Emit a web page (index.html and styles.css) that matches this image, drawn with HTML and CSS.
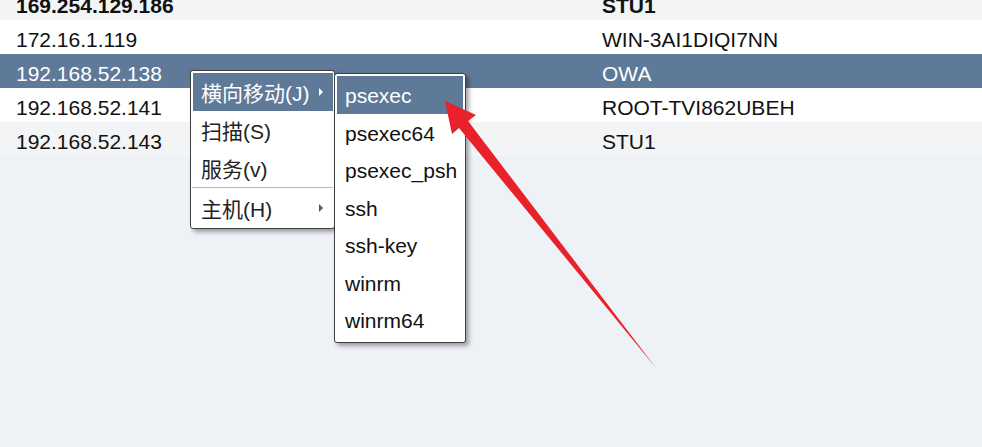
FILE: index.html
```html
<!DOCTYPE html>
<html lang="zh-CN">
<head>
    <meta charset="UTF-8">
    <meta name="viewport" content="width=device-width, initial-scale=1.0">
    <title>Targets</title>
    <link rel="stylesheet" href="styles.css">
</head>
<body>

    <div class="hosts">
        <div class="row head">
            <span>169.254.129.186</span>
            <span>STU1</span>
        </div>
        <div class="row">
            <span>172.16.1.119</span>
            <span>WIN-3AI1DIQI7NN</span>
        </div>
        <div class="row selected">
            <span>192.168.52.138</span>
            <span>OWA</span>
        </div>
        <div class="row">
            <span>192.168.52.141</span>
            <span>ROOT-TVI862UBEH</span>
        </div>
        <div class="row alt">
            <span>192.168.52.143</span>
            <span>STU1</span>
        </div>
    </div>

    <div class="menu">
        <div class="item active">横向移动(J)<span class="more"></span></div>
        <div class="item">扫描(S)</div>
        <div class="item">服务(v)</div>
        <div class="sep"></div>
        <div class="item">主机(H)<span class="more"></span></div>
    </div>

    <div class="menu sub">
        <div class="item active">psexec</div>
        <div class="item">psexec64</div>
        <div class="item">psexec_psh</div>
        <div class="item">ssh</div>
        <div class="item">ssh-key</div>
        <div class="item">winrm</div>
        <div class="item">winrm64</div>
    </div>

    <svg class="pointer" width="982" height="447" viewBox="0 0 982 447">
        <polygon points="445,101 476,115 468,121 656,368 459,128 452,134" fill="#e8212b"/>
    </svg>

</body>
</html>
```

FILE: styles.css
```css
*{
    margin: 0;
    padding: 0;
    box-sizing: border-box;
}
body{
    width: 982px;
    height: 447px;
    overflow: hidden;
    position: relative;
    background: #eef1f6;
    font-family: "Liberation Sans", "Noto Sans CJK SC", Arial, sans-serif;
    font-size: 21px;
    color: #111;
}
.hosts{
    margin-top: -14px;
}
.hosts .row{
    display: grid;
    grid-template-columns: 586px 1fr;
    height: 34px;
    padding: 5px 0 0 16px;
    line-height: 29px;
    background: #ffffff;
    white-space: nowrap;
}
.hosts .head{
    background: #f3f4f6;
    font-weight: bold;
}
.hosts .alt{
    background: #f3f4f6;
}
.hosts .selected{
    background: #5f7998;
    color: #ffffff;
}

.menu{
    position: absolute;
    left: 190px;
    top: 70px;
    width: 145px;
    padding: 2px 1px 1px 2px;
    background: #ffffff;
    border: 1px solid #3f3f3f;
    border-radius: 3px;
    box-shadow: 3px 3px 4px rgba(0, 0, 0, 0.35);
    color: #222;
}
.menu .item{
    display: flex;
    justify-content: space-between;
    align-items: center;
    height: 38px;
    padding: 3px 10px 0 8px;
    line-height: 35px;
    white-space: nowrap;
}
.menu .item.active{
    background: #5f7998;
    color: #ffffff;
}
.menu .more{
    width: 0;
    height: 0;
    margin-top: -4px;
    border-left: 4px solid #555;
    border-top: 4px solid transparent;
    border-bottom: 4px solid transparent;
}
.menu .active .more{
    border-left-color: #ffffff;
}
.menu .sep{
    height: 2px;
    margin-left: -1px;
    border-top: 1px solid #b9b9b9;
    border-bottom: 1px solid #ffffff;
}

.menu.sub{
    left: 334px;
    top: 73px;
    width: 132px;
    padding: 2px 2px 3px 2px;
    color: #111;
}
.menu.sub .item{
    height: 37.5px;
    padding: 3px 0 0 8px;
    line-height: 34.5px;
}

.pointer{
    position: absolute;
    left: 0;
    top: 0;
}
```
